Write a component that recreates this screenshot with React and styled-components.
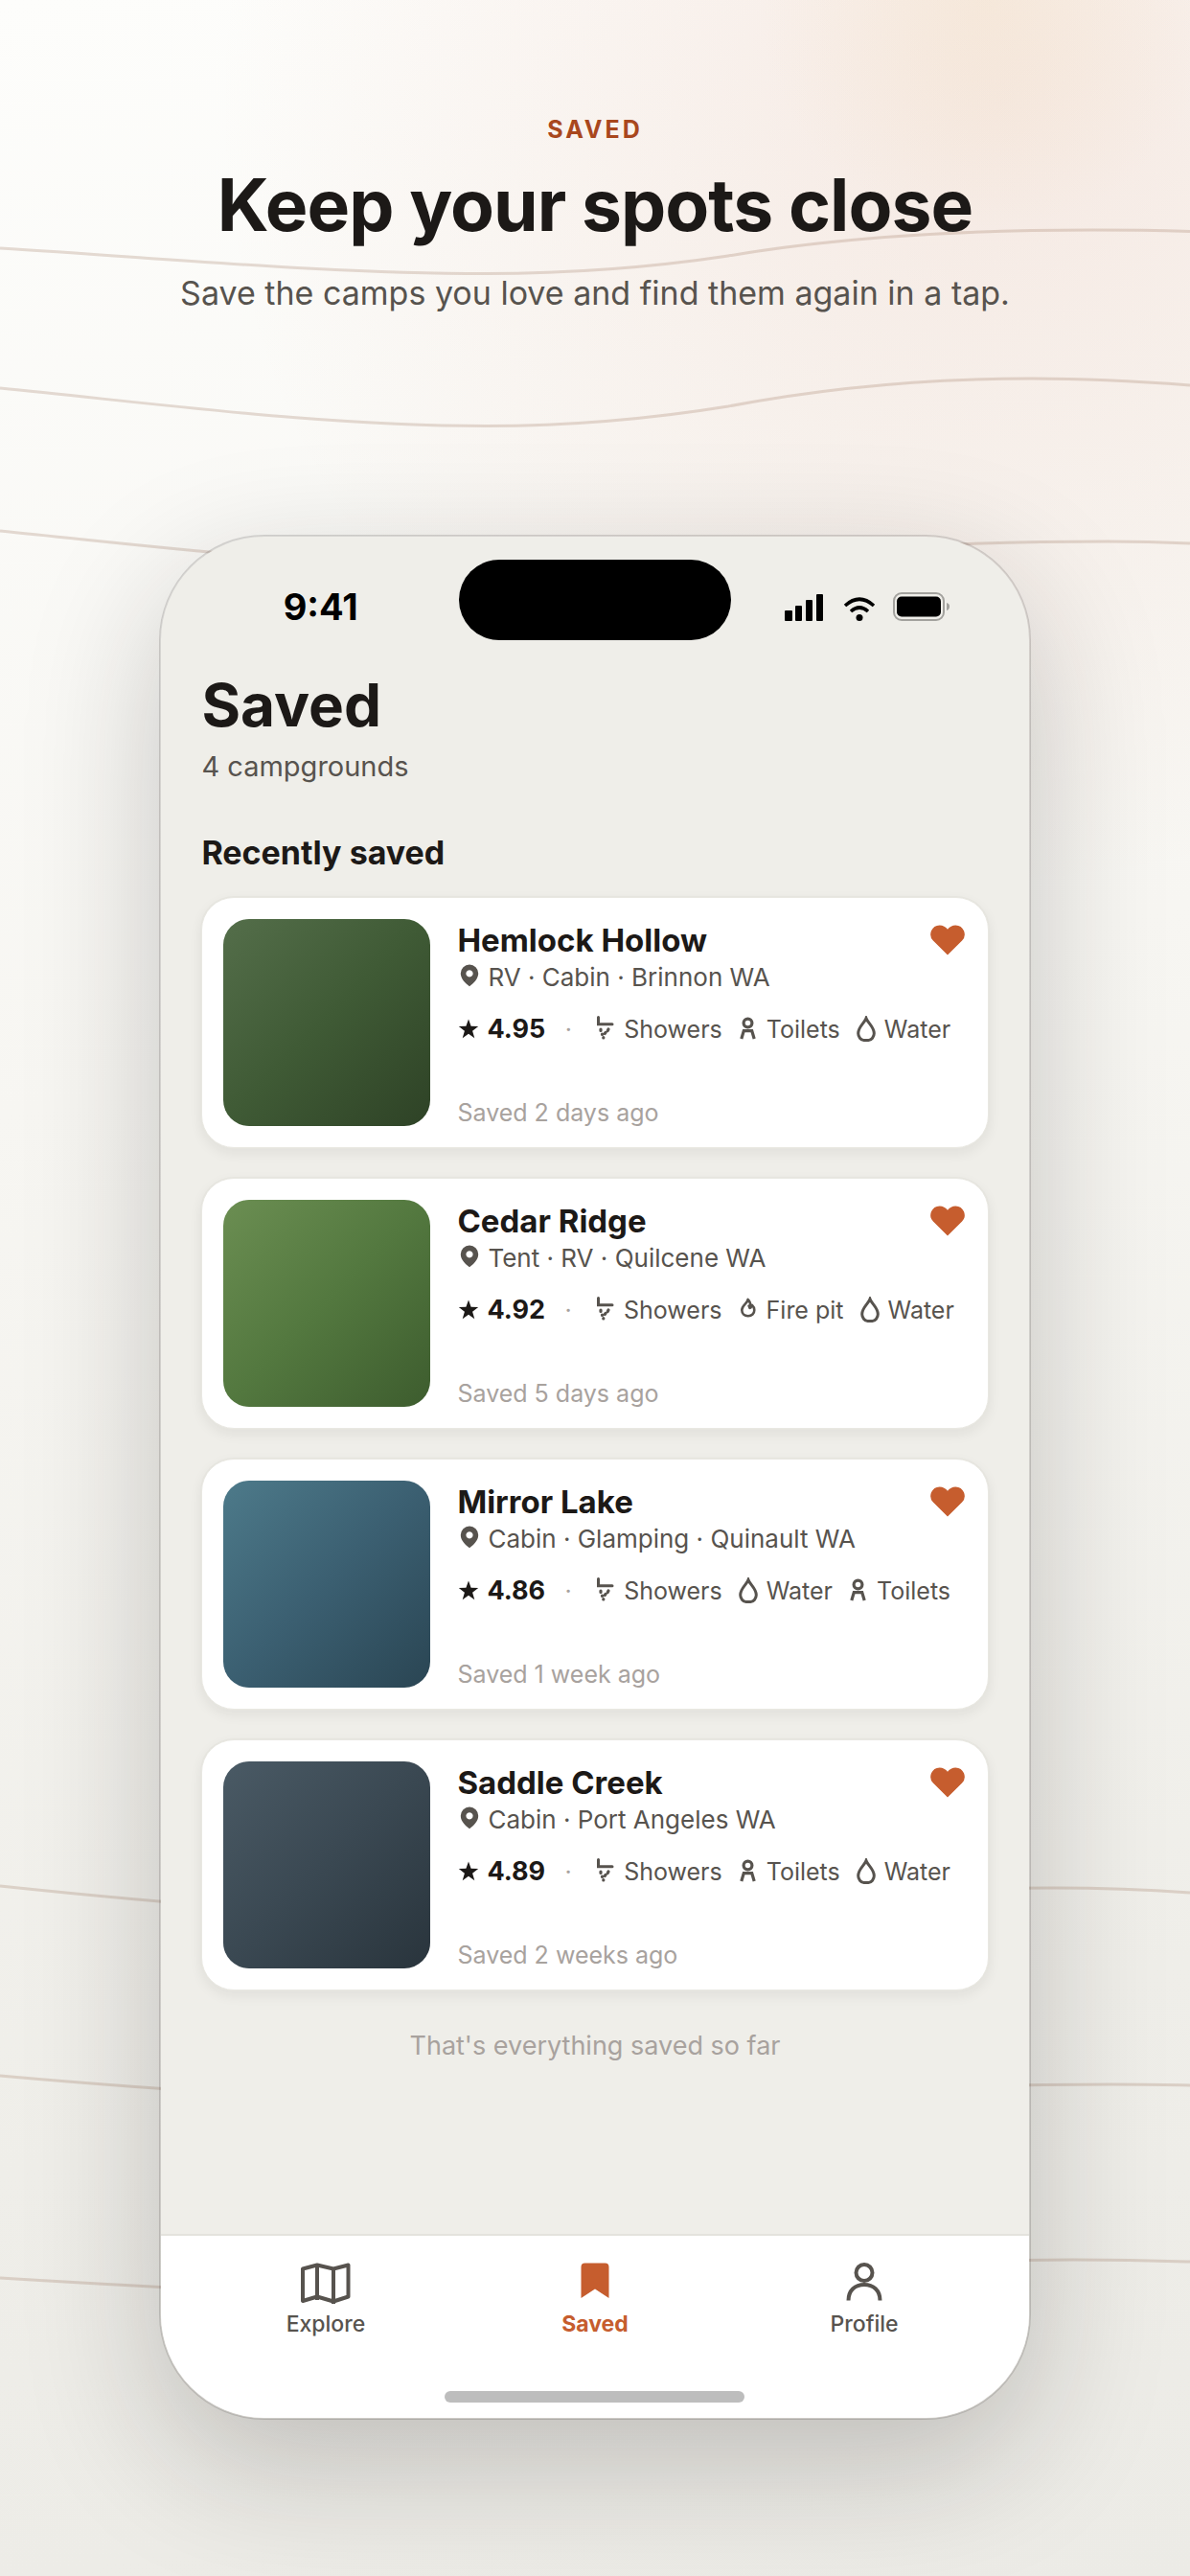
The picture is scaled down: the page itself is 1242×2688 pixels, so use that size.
import React from "react";
import styled, { createGlobalStyle, css } from "styled-components";

const ink = "#1c1917";
const muted = "#57534e";
const faint = "#a8a29e";
const accent = "#c65d2e";

const GlobalStyle = createGlobalStyle`
  *, *::before, *::after { box-sizing: border-box; }
  body {
    margin: 0;
    background: #efeee9;
    font-family: Inter, "Liberation Sans", sans-serif;
    color: ${ink};
  }
  h1, h2, h3, p, ul { margin: 0; padding: 0; }
  ul { list-style: none; }
`;

const Page = styled.main`
  position: relative;
  min-height: 100vh;
  overflow: hidden;
  display: flex;
  flex-direction: column;
  align-items: center;
  gap: 228px;
  padding: 112px 0 161px;
  background:
    radial-gradient(circle at 83% 0%, rgba(236, 200, 130, 0.12), rgba(236, 200, 130, 0) 240px),
    radial-gradient(circle at 84% 4%, rgba(210, 125, 95, 0.14), rgba(210, 125, 95, 0) 820px),
    linear-gradient(170deg, #fdfdfb 0%, #f7f6f2 40%, #efeee9 78%, #ecebe6 100%);
`;

const Contours = styled.svg`
  position: absolute;
  inset: 0;
  width: 100%;
  height: 100%;
  fill: none;
  stroke: #9a745a;
  stroke-opacity: 0.25;
  stroke-width: 3;
`;

const Hero = styled.header`
  position: relative;
  display: flex;
  flex-direction: column;
  align-items: center;
  text-align: center;
`;

const Eyebrow = styled.p`
  font-size: 25px;
  line-height: 46px;
  font-weight: 700;
  letter-spacing: 3px;
  color: #a9471d;
`;

const Headline = styled.h1`
  margin-top: 8px;
  font-size: 75px;
  line-height: 96px;
  font-weight: 700;
  letter-spacing: -1px;
`;

const Lede = styled.p`
  margin-top: 20px;
  font-size: 34px;
  line-height: 48px;
  color: ${muted};
`;

const Phone = styled.section`
  position: relative;
  width: 73.2%;
  display: flex;
  flex-direction: column;
  overflow: hidden;
  border: 2px solid rgba(28, 25, 23, 0.16);
  border-radius: 110px;
  background: #efeee9;
  background-clip: padding-box;
  box-shadow: 0 46px 140px rgba(28, 25, 23, 0.22);
`;

const StatusBar = styled.div`
  display: grid;
  grid-template-columns: 1fr 284px 1fr;
  align-items: start;
  padding-top: 24px;
`;

const Clock = styled.time`
  justify-self: center;
  margin-top: 26px;
  padding-left: 22px;
  font-size: 38px;
  line-height: 46px;
  font-weight: 700;
  color: #000;
`;

const Island = styled.div`
  height: 84px;
  border-radius: 42px;
  background: #000;
`;

const StatusIcons = styled.div`
  justify-self: center;
  margin-top: 34px;
  padding-right: 26px;
  display: flex;
  svg { display: block; }
`;

const Screen = styled.div`
  display: flex;
  flex-direction: column;
  padding: 30px 42px 176px;
`;

const Title = styled.h2`
  font-size: 62px;
  line-height: 76px;
  font-weight: 700;
`;

const Count = styled.p`
  margin-top: 6px;
  font-size: 29px;
  line-height: 40px;
  color: ${muted};
`;

const SectionTitle = styled.h3`
  margin-top: 48px;
  font-size: 34px;
  line-height: 44px;
  font-weight: 700;
`;

const List = styled.ul`
  margin-top: 24px;
  display: flex;
  flex-direction: column;
  gap: 31px;
`;

const Card = styled.li`
  display: flex;
  gap: 28px;
  padding: 22px;
  border-radius: 34px;
  border: 1px solid #e9e8e2;
  background: #fff;
  box-shadow: 0 0 0 1px #e6e5df, 0 5px 14px rgba(28, 25, 23, 0.07);
`;

const Thumb = styled.div`
  flex: none;
  width: 216px;
  height: 216px;
  border-radius: 27px;
  background: linear-gradient(135deg, ${(p) => p.$from}, ${(p) => p.$mid}, ${(p) => p.$to});
`;

const Details = styled.div`
  flex: 1;
  min-width: 0;
  display: flex;
  flex-direction: column;
`;

const CardTop = styled.div`
  display: flex;
  justify-content: space-between;
  align-items: flex-start;
`;

const Name = styled.h4`
  margin: 0;
  font-size: 33px;
  line-height: 44px;
  font-weight: 700;
`;

const HeartButton = styled.button`
  display: block;
  margin: 6px 2px 0 0;
  padding: 0;
  border: 0;
  background: none;
  color: ${accent};
  cursor: pointer;
  svg { display: block; }
`;

const Row = styled.div`
  display: flex;
  align-items: center;
  white-space: nowrap;
  line-height: 34px;
  color: ${muted};
  svg { display: block; flex: none; }
`;

const Meta = styled(Row)`
  gap: 6px;
  font-size: 26px;
  svg { margin-bottom: 4px; }
`;

const Facts = styled(Row)`
  margin-top: 20px;
  font-size: 25px;
`;

const Rating = styled.strong`
  margin-left: 8px;
  font-size: 27px;
  font-weight: 700;
  color: ${ink};
`;

const Dot = styled.span`
  width: 48px;
  text-align: center;
  color: ${faint};
`;

const Amenities = styled.ul`
  margin-left: 4px;
  display: flex;
  gap: 16px;
`;

const Amenity = styled.li`
  display: flex;
  align-items: center;
  gap: 8px;
`;

const SavedAt = styled.p`
  margin-top: auto;
  font-size: 25px;
  line-height: 28px;
  color: ${faint};
`;

const EndNote = styled.p`
  margin-top: 38px;
  font-size: 27px;
  line-height: 40px;
  text-align: center;
  color: ${faint};
`;

const TabBar = styled.nav`
  display: flex;
  flex-wrap: wrap;
  padding: 28px 31px 16px;
  border-top: 2px solid #e4e3dd;
  background: #fff;
`;

const Tab = styled.a`
  flex: 1;
  display: flex;
  flex-direction: column;
  align-items: center;
  gap: 4px;
  font-size: 23px;
  line-height: 32px;
  font-weight: 500;
  text-decoration: none;
  color: ${muted};
  ${(p) => p.$active && css`
    font-weight: 700;
    color: ${accent};
  `}
  svg { display: block; }
`;

const HomeRow = styled.div`
  width: 100%;
`;

const HomeIndicator = styled.div`
  width: 313px;
  height: 12px;
  margin: 54px auto 0;
  border-radius: 6px;
  background: #bdbdbd;
`;

const SignalIcon = () => (
  <svg width="172" height="32" viewBox="0 0 172 32" aria-hidden="true">
    <rect x="0" y="19" width="8" height="11" rx="1" />
    <rect x="11" y="14" width="7" height="16" rx="1" />
    <rect x="22" y="8" width="7" height="22" rx="1" />
    <rect x="33" y="2" width="7" height="28" rx="1" />
    <g fill="none" stroke="#000" strokeWidth="3.6">
      <path d="M63 14 Q78 0.500 93 14" />
      <path d="M69 20 Q78 12 87 20" />
    </g>
    <circle cx="78" cy="26.500" r="3.500" />
    <rect x="114" y="1" width="52" height="28" rx="8" fill="none" stroke="#a3a29e" strokeWidth="2" />
    <rect x="117" y="4.500" width="46" height="21" rx="5" />
    <path d="M169 11 q3.500 1 3 4 q0 3 -3 4 z" fill="#a3a29e" />
  </svg>
);

const HeartIcon = () => (
  <svg width="36" height="32" viewBox="0 0 36 32" aria-hidden="true">
    <path fill="currentColor" d="M18 31.500 L2.900 16.600 A9.600 9.600 0 0 1 9.600 0.400 C13 0.400 16.200 2 18 4.800 C19.800 2 23 0.400 26.400 0.400 A9.600 9.600 0 0 1 33.100 16.600 Z" />
  </svg>
);

const PinIcon = () => (
  <svg width="26" height="24" viewBox="0 0 26 24" aria-hidden="true">
    <path fill={muted} fillRule="evenodd" d="M13 0.500 a9.200 9.200 0 0 1 9.200 9.200 c0 6 -5.200 10.400 -9.200 13.600 c-4 -3.200 -9.200 -7.600 -9.200 -13.600 A9.200 9.200 0 0 1 13 0.500 Z M13 6.300 a3.600 3.600 0 1 0 0.010 0 Z" />
  </svg>
);

const StarIcon = () => (
  <svg width="23" height="22" viewBox="0 0 23 22" aria-hidden="true">
    <path fill={ink} d="M12 0.500 L14.600 7.800 L22.200 8 L16.100 12.700 L18.300 20.200 L12 15.800 L5.700 20.200 L7.900 12.700 L1.800 8 L9.400 7.800 Z" />
  </svg>
);

const AmenityGlyph = ({ children }) => (
  <svg width="22" height="28" viewBox="0 0 22 28" fill="none" stroke={muted} strokeWidth="3" strokeLinecap="round" aria-hidden="true">
    {children}
  </svg>
);

const ShowerIcon = () => (
  <AmenityGlyph>
    <path d="M3.500 1.500 V8.800 H18" strokeWidth="3" />
    <path d="M6 14 v1.500 M7.500 19 v0.500 M14 14 l-0.800 1.600 M11 17.500 l-0.800 1 M8.800 22.500 v0.500" strokeWidth="3.200" />
  </AmenityGlyph>
);

const ToiletIcon = () => (
  <AmenityGlyph>
    <circle cx="10.500" cy="7.500" r="4.400" strokeWidth="3.200" />
    <path d="M3.800 24 L6.300 15.600 H14.700 L17.200 24" strokeWidth="3.200" strokeLinecap="butt" />
  </AmenityGlyph>
);

const WaterIcon = () => (
  <AmenityGlyph>
    <path d="M11 2.500 C9 8 2.700 11.500 2.700 18.300 C2.700 22 5.500 25.500 8.500 25.500 H13.500 C16.500 25.500 19.300 22 19.300 18.300 C19.300 11.500 13 8 11 2.500 Z" strokeWidth="3" />
  </AmenityGlyph>
);

const FireIcon = () => (
  <AmenityGlyph>
    <path d="M10.500 3 C10.500 7 4.300 8.500 4.300 14 C4.300 17.800 7 20.200 10.800 20.200 C14.600 20.200 17.300 17.800 17.300 14 C17.300 12 16.500 10.300 15 9 L13.400 11.500 C13.600 8.300 12.500 4.800 10.500 3 Z" strokeWidth="2.600" strokeLinejoin="round" />
    <path d="M11.500 9.500 L12.500 12" strokeWidth="2.400" />
  </AmenityGlyph>
);

const MapIcon = () => (
  <svg width="54" height="44" viewBox="0 0 54 44" fill="none" stroke="currentColor" strokeWidth="4" strokeLinejoin="round" aria-hidden="true">
    <path d="M3 6.500 L18 2.500 L35 6.500 L50.500 2.500 V35.500 L35 40.500 L18 35.500 L3 40 Z" />
    <path d="M18 2.500 V39 M35 6.500 V43" />
  </svg>
);

const BookmarkIcon = () => (
  <svg width="30" height="44" viewBox="0 0 30 44" aria-hidden="true">
    <path fill="currentColor" d="M0.500 4.500 a4 4 0 0 1 4 -4 h21 a4 4 0 0 1 4 4 V37 L15 27.500 L0.500 37 Z" />
  </svg>
);

const ProfileIcon = () => (
  <svg width="40" height="44" viewBox="0 0 40 44" fill="none" stroke="currentColor" strokeWidth="4" aria-hidden="true">
    <circle cx="20" cy="10.500" r="8.500" />
    <path d="M3.500 39.500 C3.500 29 10.500 23 20 23 C29.500 23 36.500 29 36.500 39.500" />
  </svg>
);

const amenityIcons = {
  Showers: ShowerIcon,
  Toilets: ToiletIcon,
  Water: WaterIcon,
  "Fire pit": FireIcon,
};

const camps = [
  { name: "Hemlock Hollow", meta: "RV · Cabin · Brinnon WA", rating: "4.95", amenities: ["Showers", "Toilets", "Water"], saved: "Saved 2 days ago", colors: ["#546e4a", "#3f5a35", "#2e4226"] },
  { name: "Cedar Ridge", meta: "Tent · RV · Quilcene WA", rating: "4.92", amenities: ["Showers", "Fire pit", "Water"], saved: "Saved 5 days ago", colors: ["#6b8e52", "#53783f", "#3d5c2e"] },
  { name: "Mirror Lake", meta: "Cabin · Glamping · Quinault WA", rating: "4.86", amenities: ["Showers", "Water", "Toilets"], saved: "Saved 1 week ago", colors: ["#4d7a8a", "#3b5f71", "#2a4553"] },
  { name: "Saddle Creek", meta: "Cabin · Port Angeles WA", rating: "4.89", amenities: ["Showers", "Toilets", "Water"], saved: "Saved 2 weeks ago", colors: ["#4a5a65", "#3a4852", "#29343c"] },
];

const CampCard = ({ camp }) => (
  <Card>
    <Thumb $from={camp.colors[0]} $mid={camp.colors[1]} $to={camp.colors[2]} />
    <Details>
      <CardTop>
        <Name>{camp.name}</Name>
        <HeartButton type="button" aria-label={`Remove ${camp.name} from saved`}>
          <HeartIcon />
        </HeartButton>
      </CardTop>
      <Meta>
        <PinIcon />
        <span>{camp.meta}</span>
      </Meta>
      <Facts>
        <StarIcon />
        <Rating>{camp.rating}</Rating>
        <Dot>·</Dot>
        <Amenities>
          {camp.amenities.map((label) => {
            const Icon = amenityIcons[label];
            return (
              <Amenity key={label}>
                <Icon />
                {label}
              </Amenity>
            );
          })}
        </Amenities>
      </Facts>
      <SavedAt>{camp.saved}</SavedAt>
    </Details>
  </Card>
);

export default function App() {
  return (
    <Page>
      <GlobalStyle />
      <Contours viewBox="0 0 1242 2688" preserveAspectRatio="none" aria-hidden="true">
        <path d="M0 259 C180 270 340 285.500 507 285.500 C600 285.500 680 279 760 267 C860 250 980 240 1140 240 C1180 240 1210 240.500 1242 241.500" />
        <path d="M0 405 C180 423 340 444.500 507 444.500 C600 444.500 680 437 760 424 C860 405 960 395 1077 395 C1140 395 1190 398 1242 402" />
        <path d="M0 554 C180 572 340 592 507 592 C700 592 880 565 1156 565 C1190 565 1220 566 1242 567" />
        <path d="M0 1968 C180 1987 340 2000 507 2000 C700 2000 880 1970 1100 1970 C1150 1970 1200 1972 1242 1975" />
        <path d="M0 2166 C180 2182 340 2192 507 2192 C700 2192 900 2175 1160 2175 C1190 2175 1210 2175 1242 2176" />
        <path d="M0 2377 C180 2388 340 2396 507 2396 C700 2396 880 2358 1120 2358 C1180 2358 1210 2359 1242 2360" />
      </Contours>
      <Hero>
        <Eyebrow>SAVED</Eyebrow>
        <Headline>Keep your spots close</Headline>
        <Lede>Save the camps you love and find them again in a tap.</Lede>
      </Hero>
      <Phone>
        <StatusBar>
          <Clock>9:41</Clock>
          <Island />
          <StatusIcons>
            <SignalIcon />
          </StatusIcons>
        </StatusBar>
        <Screen>
          <Title>Saved</Title>
          <Count>4 campgrounds</Count>
          <SectionTitle>Recently saved</SectionTitle>
          <List>
            {camps.map((camp) => (
              <CampCard key={camp.name} camp={camp} />
            ))}
          </List>
          <EndNote>That's everything saved so far</EndNote>
        </Screen>
        <TabBar>
          <Tab href="#explore">
            <MapIcon />
            Explore
          </Tab>
          <Tab href="#saved" $active aria-current="page">
            <BookmarkIcon />
            Saved
          </Tab>
          <Tab href="#profile">
            <ProfileIcon />
            Profile
          </Tab>
          <HomeRow>
            <HomeIndicator />
          </HomeRow>
        </TabBar>
      </Phone>
    </Page>
  );
}
